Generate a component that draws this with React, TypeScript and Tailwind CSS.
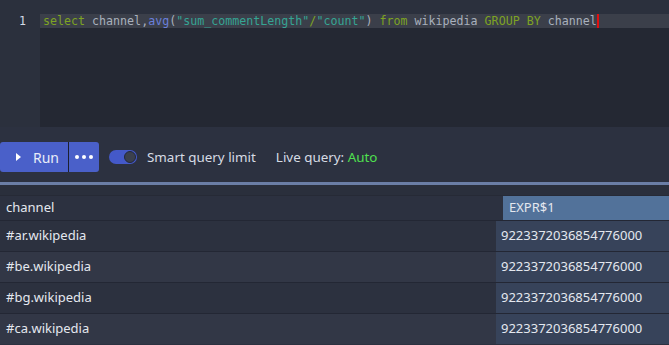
const rows = ['#ar.wikipedia', '#be.wikipedia', '#bg.wikipedia', '#ca.wikipedia'];
const VALUE = '9223372036854776000';

function Editor() {
  return (
    <div className="flex h-[127px] bg-[#2b303d]">
      <div className="w-[40px] shrink-0 pt-[14px] pr-[14px] text-right font-['DejaVu_Sans_Mono',monospace] text-[11.65px] leading-[14px] text-[#d3dae6]">
        1
      </div>
      <div className="flex flex-1 flex-col pt-[14px]">
        <div className="flex h-[14px] items-center bg-[#3b3f4a] pl-[3px] font-['DejaVu_Sans_Mono',monospace] text-[11.65px] leading-[14px] whitespace-pre">
          <span className="text-[#7ea323]">select</span>
          <span className="text-[#a9b1bd]"> channel,</span>
          <span className="text-[#6a7fdc]">avg</span>
          <span className="text-[#a9b1bd]">(</span>
          <span className="text-[#35a594]">"sum_commentLength"</span>
          <span className="text-[#7ea323]">/</span>
          <span className="text-[#35a594]">"count"</span>
          <span className="text-[#a9b1bd]">) </span>
          <span className="text-[#7ea323]">from</span>
          <span className="text-[#a9b1bd]"> wikipedia </span>
          <span className="text-[#7ea323]">GROUP BY</span>
          <span className="text-[#a9b1bd]"> channel</span>
          <span className="inline-block h-[14px] w-[2px] bg-[#e01010]" />
        </div>
        <div className="flex-1 bg-[#242833]" />
      </div>
    </div>
  );
}

function Toolbar() {
  return (
    <div className="flex h-[55px] items-center bg-[#2c3140] pt-[5px] text-[13.4px] text-[#d6dbe4]">
      <div className="flex h-[30px] w-[99px] overflow-hidden rounded-[3px] bg-[#4a60c9] text-white">
        <button className="flex w-[68px] items-center pl-[16px]">
          <span className="h-0 w-0 border-y-[4px] border-l-[5px] border-y-transparent border-l-white" />
          <span className="ml-[12px] text-[14px] text-[#e8ecf8]">Run</span>
        </button>
        <div className="w-[1px] bg-[#1c2030]" />
        <button className="flex flex-1 items-center justify-center gap-[3px]">
          <span className="h-[4px] w-[4px] rounded-full bg-white" />
          <span className="h-[4px] w-[4px] rounded-full bg-white" />
          <span className="h-[4px] w-[4px] rounded-full bg-white" />
        </button>
      </div>
      <div className="ml-[10px] flex h-[14px] w-[28px] items-center justify-end rounded-full bg-[#4459c9] pr-[1px]">
        <span className="h-[12px] w-[12px] rounded-full border border-[#23283a] bg-[#3b404d]" />
      </div>
      <span className="ml-[10px]">Smart query limit</span>
      <span className="ml-[20px]">
        Live query: <span className="text-[#4fe04f]">Auto</span>
      </span>
    </div>
  );
}

function Results() {
  return (
    <div className="flex flex-col bg-[#2a2f3c] pt-[10px] text-[13px] text-[#e4e8ef]">
      <div className="flex h-[25px] border-t border-[#262a36]">
        <div className="flex w-[503px] items-center bg-[#2c3140] pl-[6px]">channel</div>
        <div className="flex flex-1 items-center bg-[#52729a] pl-[6px]">EXPR$1</div>
      </div>
      {rows.map((r, i) => (
        <div key={r} className="flex h-[31px] border-t border-[#232734]">
          <div
            className={
              'flex w-[496px] items-center pl-[6px] ' + (i % 2 === 0 ? 'bg-[#2c313f]' : 'bg-[#323746]')
            }
          >
            {r}
          </div>
          <div className="flex flex-1 items-center bg-[#37435a] pl-[5px]">{VALUE}</div>
        </div>
      ))}
    </div>
  );
}

export default function App() {
  return (
    <div className="h-[345px] w-[669px] overflow-hidden bg-[#2c3140] font-['Noto_Sans',sans-serif]">
      <Editor />
      <Toolbar />
      <div className="h-[3px] bg-[#6b7ea6]" />
      <Results />
    </div>
  );
}
